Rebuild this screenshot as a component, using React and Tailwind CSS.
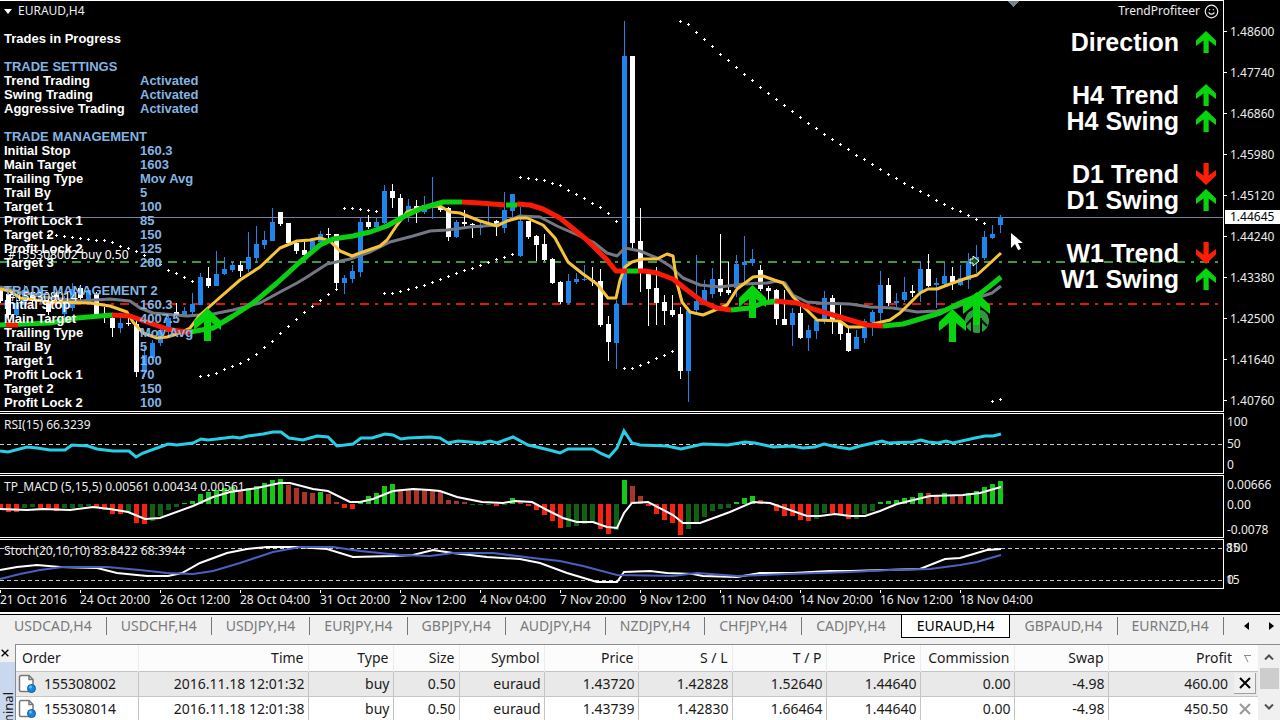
import { Smile } from 'lucide-react';

const SETTINGS = [
  { title: 'Trades in Progress', plain: true, rows: [] },
  {
    title: 'TRADE SETTINGS',
    rows: [
      ['Trend Trading', 'Activated'],
      ['Swing Trading', 'Activated'],
      ['Aggressive Trading', 'Activated'],
    ],
  },
  {
    title: 'TRADE MANAGEMENT',
    rows: [
      ['Initial Stop', '160.3'],
      ['Main Target', '1603'],
      ['Trailing Type', 'Mov Avg'],
      ['Trail By', '5'],
      ['Target 1', '100'],
      ['Profit Lock 1', '85'],
      ['Target 2', '150'],
      ['Profit Lock 2', '125'],
      ['Target 3', '200'],
    ],
  },
  {
    title: 'TRADE MANAGEMENT 2',
    rows: [
      ['Initial Stop', '160.3'],
      ['Main Target', '4007.5'],
      ['Trailing Type', 'Mov Avg'],
      ['Trail By', '5'],
      ['Target 1', '100'],
      ['Profit Lock 1', '70'],
      ['Target 2', '150'],
      ['Profit Lock 2', '100'],
    ],
  },
];

const SIGNALS = [
  [['Direction', true]],
  [['H4 Trend', true], ['H4 Swing', true]],
  [['D1 Trend', false], ['D1 Swing', true]],
  [['W1 Trend', false], ['W1 Swing', true]],
];

const PRICES = ['1.48600', '1.47740', '1.46860', '1.45980', '1.45120', '1.44240', '1.43380', '1.42500', '1.41640', '1.40760'];

const DATES = [
  '21 Oct 2016', '24 Oct 20:00', '26 Oct 12:00', '28 Oct 04:00', '31 Oct 20:00', '2 Nov 12:00', '4 Nov 04:00',
  '7 Nov 20:00', '9 Nov 12:00', '11 Nov 04:00', '14 Nov 20:00', '16 Nov 12:00', '18 Nov 04:00',
];

const TABS = ['USDCAD', 'USDCHF', 'USDJPY', 'EURJPY', 'GBPJPY', 'AUDJPY', 'NZDJPY', 'CHFJPY', 'CADJPY', 'EURAUD', 'GBPAUD', 'EURNZD'];

const ORDERS = [
  ['155308002', '2016.11.18 12:01:32', 'buy', '0.50', 'euraud', '1.43720', '1.42828', '1.52640', '1.44640', '0.00', '-4.98', '460.00'],
  ['155308014', '2016.11.18 12:01:38', 'buy', '0.50', 'euraud', '1.43739', '1.42830', '1.66464', '1.44640', '0.00', '-4.98', '450.50'],
];

// One candle every 8px: [colour, high, body top, body bottom, low]
const CANDLES = [
  ['w', 289, 290, 301, 303], ['w', 290, 294, 315, 318], ['b', 296, 303, 315, 318], ['b', 285, 290, 305, 308],
  ['w', 290, 295, 299, 304], ['b', 286, 290, 300, 304], ['w', 298, 302, 312, 315], ['w', 292, 295, 300, 304],
  ['b', 296, 300, 314, 318], ['b', 283, 289, 308, 311], ['w', 285, 288, 298, 302], ['b', 288, 290, 300, 304],
  ['w', 292, 294, 314, 316], ['w', 307, 314, 317, 323], ['w', 315, 318, 328, 337], ['b', 315, 323, 328, 333],
  ['w', 315, 323, 324, 326], ['w', 320, 324, 372, 377], ['b', 345, 355, 372, 377], ['b', 340, 343, 358, 360],
  ['b', 325, 330, 343, 346], ['b', 315, 318, 332, 335], ['w', 303, 312, 316, 317], ['b', 307, 311, 315, 317],
  ['b', 293, 304, 312, 315], ['b', 273, 277, 305, 305], ['w', 267, 278, 286, 288], ['b', 251, 274, 286, 286],
  ['b', 257, 269, 274, 275], ['b', 262, 265, 270, 272], ['w', 261, 265, 271, 277], ['b', 232, 257, 269, 272],
  ['b', 226, 244, 258, 262], ['b', 231, 240, 245, 249], ['b', 208, 222, 241, 241], ['w', 212, 212, 224, 226],
  ['w', 223, 223, 243, 243], ['w', 241, 243, 251, 254], ['w', 242, 250, 255, 256], ['b', 239, 241, 251, 252],
  ['b', 231, 234, 242, 246], ['w', 228, 234, 235, 239], ['w', 234, 234, 283, 291], ['b', 275, 278, 283, 294],
  ['b', 265, 271, 279, 283], ['b', 217, 222, 272, 277], ['w', 215, 222, 227, 229], ['b', 217, 222, 227, 228],
  ['b', 185, 191, 223, 224], ['w', 184, 191, 198, 208], ['w', 194, 198, 218, 220], ['b', 199, 206, 211, 222],
  ['w', 200, 206, 208, 223], ['b', 196, 205, 212, 214], ['b', 177, 204, 205, 219], ['w', 203, 206, 210, 212],
  ['w', 207, 208, 237, 241], ['b', 220, 222, 237, 238], ['w', 210, 222, 224, 227], ['w', 223, 224, 225, 238],
  ['b', 222, 227, 228, 235], ['b', 206, 226, 227, 227], ['w', 220, 221, 226, 236], ['b', 192, 210, 228, 233],
  ['b', 194, 194, 211, 217], ['b', 207, 221, 256, 257], ['w', 221, 221, 237, 239], ['w', 235, 236, 245, 261],
  ['w', 234, 244, 260, 261], ['w', 258, 259, 283, 284], ['w', 281, 282, 302, 304], ['b', 274, 281, 303, 304],
  ['b', 273, 279, 282, 284], ['b', 265, 279, 280, 281], ['w', 267, 280, 281, 286], ['w', 269, 281, 325, 327],
  ['w', 316, 324, 342, 361], ['b', 300, 304, 343, 369], ['b', 21, 56, 305, 305], ['w', 56, 56, 243, 251],
  ['w', 208, 241, 271, 292], ['w', 272, 274, 289, 326], ['w', 267, 288, 303, 325], ['w', 295, 302, 311, 325],
  ['w', 295, 310, 315, 317], ['w', 307, 314, 371, 379], ['b', 308, 311, 371, 402], ['b', 255, 301, 310, 312],
  ['b', 280, 290, 301, 303], ['b', 268, 279, 294, 298], ['w', 234, 279, 292, 296], ['w', 262, 290, 293, 295],
  ['b', 255, 264, 288, 297], ['b', 236, 262, 265, 283], ['b', 249, 259, 263, 266], ['w', 265, 270, 289, 291],
  ['w', 286, 288, 291, 300], ['w', 289, 290, 319, 325], ['w', 290, 319, 325, 325], ['b', 308, 313, 325, 346],
  ['w', 306, 313, 338, 339], ['b', 325, 330, 338, 351], ['b', 318, 320, 331, 339], ['b', 291, 298, 319, 324],
  ['w', 295, 298, 322, 334], ['w', 305, 322, 334, 340], ['w', 328, 333, 351, 352], ['b', 330, 337, 349, 349],
  ['b', 319, 321, 338, 343], ['b', 310, 312, 322, 336], ['b', 271, 285, 313, 322], ['w', 278, 285, 303, 306],
  ['b', 293, 301, 303, 307], ['b', 277, 292, 300, 302], ['w', 285, 291, 293, 297], ['b', 261, 269, 292, 302],
  ['w', 254, 269, 286, 287], ['b', 278, 283, 285, 308], ['b', 263, 276, 284, 287], ['w', 267, 276, 282, 290],
  ['b', 265, 278, 285, 286], ['b', 253, 262, 280, 289], ['b', 245, 257, 261, 273], ['b', 231, 237, 258, 260],
  ['b', 225, 234, 238, 239], ['b', 215, 217, 225, 233],
];

// Parabolic SAR runs: [first candle, prices along the run]
const SAR = [
  [6, [235, 235, 236, 237, 238, 239, 240, 240, 242, 246, 248, 251, 255, 259, 264, 270, 273, 277, 281]],
  [25, [376, 375, 373, 369, 366, 363, 359, 354, 347, 341, 333, 326, 319, 312, 306, 300, 294, 289]],
  [43, [208, 208, 209, 210, 211]],
  [48, [293, 293, 291, 289, 287, 285, 282, 279, 276, 273, 270, 268, 265, 262, 259, 257, 254]],
  [65, [177, 178, 179, 180, 183, 185, 190, 194, 198, 203, 207, 213, 221]],
  [78, [368, 368, 365, 362, 358, 355, 351]],
  [85, [21, 24, 32, 39, 46, 54, 60, 67, 74, 80, 87, 93, 99, 105, 111, 117, 123, 128, 134, 139, 144, 149, 155, 159, 164, 169, 174, 178, 183, 187, 191, 195, 200, 204, 208, 211, 215, 219, 223]],
  [124, [401, 399]],
];

const GRAY_MA =
  '0,287 20,292 43,297 80,301 110,299 130,301 140,308 153,313 187,316 213,314 233,310 260,303 280,292 297,283 307,277 327,264 350,259 370,252 390,242 413,236 430,231 447,230 470,227 497,225 507,221 520,216 540,217 557,226 573,233 593,242 607,253 617,256 625,248 640,251 657,258 670,266 683,278 700,285 720,287 743,284 767,283 777,281 785,283 793,295 807,302 820,303 850,304 870,307 893,308 917,312 937,311 957,307 977,298 992,293 1001,286';
const YELLOW_MA =
  '0,289 10,291 20,298 50,302 90,303 110,306 127,312 133,322 143,333 157,338 167,337 177,334 190,328 200,315 217,300 240,280 260,267 280,248 297,241 310,240 320,238 330,241 340,251 352,256 360,253 380,246 387,240 397,225 407,212 423,207 440,206 450,212 460,213 480,221 497,226 507,221 518,218 527,218 543,225 555,238 568,262 583,274 597,284 608,298 616,298 620,280 625,267 632,262 643,259 657,259 667,254 673,256 677,283 682,302 690,312 703,315 720,308 727,305 737,289 753,277 763,276 777,281 783,283 793,297 807,310 817,320 840,321 848,327 860,327 877,323 890,320 900,313 920,293 928,289 937,289 950,284 967,278 977,275 987,266 1001,253';

const TREND_MA = [
  ['up', '0,325 50,323 77,318 100,316 113,315'],
  ['down', '6,325 18,325'],
  ['up', '190,332 213,328 233,316 253,303 277,283 300,262 320,245 333,239 353,236 370,232 387,226 403,217 420,209 433,205 443,202 462,202'],
  ['down', '112,315 130,316 147,322 167,329 185,332 190,332'],
  ['down', '462,202 480,203 505,205'],
  ['down', '517,204 530,205 543,209 560,218 587,240 607,260 616,271 627,271'],
  ['up', '506,205 517,205'],
  ['down', '638,271 645,271 657,273 673,279 687,290 703,302 717,308 731,310'],
  ['up', '627,271 638,271'],
  ['up', '731,310 750,308 763,303 775,301'],
  ['down', '775,301 797,303 813,309 833,315 850,320 867,325 883,326'],
  ['up', '883,326 903,324 920,319 940,313 960,303 977,296 990,286 1001,277'],
];

const RSI =
  '0,451 8,452 27,447 37,448 50,450 65,450 72,445 88,446 97,449 113,451 129,451 136,457 143,453 168,444 177,445 193,443 201,439 208,440 217,439 233,437 240,438 248,436 263,434 273,432 281,432 289,438 303,440 317,436 328,437 337,446 353,444 361,438 372,438 385,434 393,435 401,439 408,438 430,437 440,438 448,443 458,441 482,443 490,441 497,443 513,437 528,445 537,447 553,451 560,453 568,449 593,449 602,454 609,457 617,448 624,431 632,443 640,445 667,446 681,449 703,444 728,445 745,442 755,443 773,447 792,446 803,448 815,447 824,444 837,447 850,449 860,446 882,441 888,443 913,442 921,440 928,442 938,443 946,441 953,443 975,438 985,436 993,436 1001,434';

// Histogram bars: [height above zero, shade]
const MACD_BARS = [
  [-4, 'R'], [-8, 'R'], [-8, 'R'], [-4, 'g'], [-3, 'g'], [-4, 'R'], [-4, 'R'], [-7, 'R'], [-4, 'g'], [-4, 'g'], [-3, 'g'], [-2, 'g'],
  [-3, 'R'], [-6, 'R'], [-10, 'R'], [-10, 'R'], [-8, 'g'], [-19, 'R'], [-20, 'R'], [-17, 'g'], [-12, 'g'], [-6, 'g'], [-3, 'g'],
  [1, 'G'], [3, 'G'], [10, 'G'], [12, 'G'], [14, 'G'], [16, 'G'], [17, 'G'], [14, 'r'], [16, 'G'], [18, 'G'], [21, 'G'], [24, 'G'],
  [25, 'G'], [19, 'r'], [16, 'r'], [12, 'r'], [11, 'r'], [12, 'G'], [10, 'r'], [2, 'r'], [-4, 'R'], [-5, 'R'], [2, 'G'], [8, 'G'],
  [11, 'G'], [18, 'G'], [20, 'G'], [15, 'r'], [15, 'r'], [14, 'r'], [14, 'r'], [13, 'r'], [12, 'r'], [4, 'r'], [3, 'r'], [2, 'r'],
  [-1, 'g'], [-1, 'g'], [-1, 'g'], [-2, 'R'], [-1, 'g'], [6, 'G'], [2, 'r'], [-2, 'R'], [-6, 'R'], [-11, 'R'], [-17, 'R'], [-24, 'R'],
  [-23, 'g'], [-22, 'g'], [-20, 'g'], [-19, 'g'], [-25, 'R'], [-30, 'R'], [-26, 'g'], [24, 'G'], [18, 'r'], [8, 'r'], [-2, 'R'],
  [-10, 'R'], [-16, 'R'], [-19, 'R'], [-31, 'R'], [-25, 'g'], [-18, 'g'], [-13, 'g'], [-7, 'g'], [-5, 'g'], [-4, 'g'], [2, 'G'],
  [6, 'G'], [8, 'G'], [4, 'r'], [2, 'r'], [-7, 'R'], [-12, 'R'], [-12, 'R'], [-16, 'R'], [-17, 'R'], [-15, 'g'], [-9, 'g'], [-9, 'R'],
  [-10, 'R'], [-15, 'R'], [-15, 'g'], [-10, 'g'], [-7, 'g'], [2, 'G'], [3, 'G'], [4, 'G'], [6, 'G'], [7, 'G'], [11, 'G'], [11, 'r'],
  [9, 'r'], [11, 'G'], [8, 'r'], [8, 'r'], [11, 'G'], [13, 'G'], [17, 'G'], [20, 'G'], [23, 'G'],
];
const MACD_SIGNAL =
  '0,509 27,510 43,509 70,510 93,507 110,509 128,512 145,519 160,518 193,506 213,497 230,492 257,488 280,483 290,483 313,489 328,491 350,502 360,502 373,499 393,491 413,489 430,490 440,491 457,497 482,502 503,503 515,501 532,502 547,510 563,518 577,522 593,522 607,527 617,528 624,513 632,503 648,502 673,515 683,523 700,523 730,512 753,502 770,503 787,509 807,516 820,516 835,514 850,516 865,516 880,511 897,504 930,496 963,495 980,493 1001,487';

const STOCH_MAIN =
  '0,570 17,567 37,565 60,567 97,568 117,573 147,576 168,576 182,573 200,563 227,553 247,549 267,547 297,547 327,549 353,557 393,556 413,555 433,550 453,553 487,557 520,559 540,563 567,573 597,582 617,582 624,572 650,571 667,573 693,574 703,576 737,577 760,573 793,573 830,571 850,571 920,569 945,559 960,558 987,550 1001,549';
const STOCH_SIGNAL =
  '0,579 20,574 40,570 63,567 107,567 140,570 167,573 193,574 213,571 240,563 273,552 300,547 333,547 360,551 400,555 430,556 453,553 493,553 533,558 560,561 583,566 617,575 673,576 697,573 737,576 787,574 850,572 890,570 930,569 960,565 977,562 987,559 1001,555';

const FILLS = { R: '#f6220f', r: '#a93429', G: '#14c816', g: '#0f5f14' };
const LINES = { up: '#0bcf12', down: '#fa1a06' };

function Arrow({ up = true, className }) {
  return (
    <svg viewBox="0 0 20 22" className={className} aria-hidden="true">
      <path
        d={up ? 'M10 0 20 9.5V15L12.7 9.5V22H7.5V9.5L0 15V9.5Z' : 'M10 22 20 12.5V7L12.7 12.5V0H7.5V12.5L0 7V12.5Z'}
        fill={up ? '#06d40c' : '#ff1d05'}
      />
    </svg>
  );
}

function BuyArrow({ x, y }) {
  return <path transform={`translate(${x - 13} ${y})`} d="M13.5 0 27 13V22L17 14V33H10V14L0 22V13Z" fill="#06d40c" />;
}

// A plot with its value scale; the drawing uses the coordinates of the whole chart window
function Panel({ className, top, scale, drawing, children }) {
  return (
    <div className={`grid grid-cols-[minmax(0,1fr)_56px] grid-rows-[minmax(0,1fr)] ${className}`}>
      <div className="relative overflow-hidden border-y border-r border-white">
        <svg className="absolute inset-0 h-full w-full" shapeRendering="crispEdges" aria-hidden="true">
          <g transform={`translate(0 ${-top - 1})`}>{drawing}</g>
        </svg>
        {children}
      </div>
      <div className="relative">{scale}</div>
    </div>
  );
}

function PriceDrawing() {
  return (
    <>
      <line x1="0" x2="100%" y1="217.5" y2="217.5" stroke="#7a819c" />
      <line x1="0" x2="99.6%" y1="261.5" y2="261.5" stroke="#3d9a48" strokeWidth="2" strokeDasharray="9 6 3 6" />
      <line x1="0" x2="99.6%" y1="303.5" y2="303.5" stroke="#d91a14" strokeWidth="2" strokeDasharray="9 6 3 6" />
      <path d="M1007 1h12l-6 6z" fill="#74828c" />
      {CANDLES.map(([c, high, top, bottom, low], i) => (
        <g key={i} fill={c === 'w' ? '#ffffff' : '#1e84ee'}>
          <rect x={i * 8} y={high} width="1" height={Math.max(low - high, 1)} />
          <rect x={i * 8 - 2} y={top} width="5" height={bottom - top} />
        </g>
      ))}
      {SAR.map(([first, ys]) =>
        ys.map((y, i) => (
          <path key={`${first}-${i}`} d={`M${(first + i) * 8 - 1} ${y + 0.5}h3M${(first + i) * 8 + 0.5} ${y - 1}v3`} stroke="#fff" />
        ))
      )}
      <g fill="none" strokeLinejoin="round" shapeRendering="auto">
        <polyline points={GRAY_MA} stroke="#747884" strokeWidth="3" />
        <polyline points={YELLOW_MA} stroke="#f6c43c" strokeWidth="3" />
        {TREND_MA.map(([dir, points]) => (
          <polyline key={points} points={points} stroke={LINES[dir]} strokeWidth="5" />
        ))}
      </g>
      <g shapeRendering="auto">
        <circle cx="977" cy="321" r="12" fill="#2f9a3c" />
        <path d="M965 326l11-11 11 11M972 318v16M981 318v16" fill="none" stroke="#000" strokeWidth="2" />
        <BuyArrow x={207} y={308} />
        <BuyArrow x={752} y={285} />
        <BuyArrow x={952} y={309} />
        <BuyArrow x={976} y={292} />
        <path d="M970 259h3v-3l6 5-6 5v-3h-3z" fill="#0d5c1c" stroke="#fff" />
        <path d="M1011 233v15l4-4 3 6 3-1-3-6h5z" fill="#fff" />
      </g>
    </>
  );
}

function TradeSettings() {
  return (
    <div className="flex w-52 flex-col gap-[14px] pt-[3px] pl-1 font-['Liberation_Sans',sans-serif] text-[13px] leading-[14px] font-bold">
      {SETTINGS.map(group => (
        <section key={group.title}>
          <h2 className={group.plain ? 'text-white' : 'text-[#84b4e2]'}>{group.title}</h2>
          <dl>
            {group.rows.map(([label, value]) => (
              <div key={label} className="flex">
                <dt className="w-[136px] text-white">{label}</dt>
                <dd className="text-[#84b4e2]">{value}</dd>
              </div>
            ))}
          </dl>
        </section>
      ))}
    </div>
  );
}

function Signals() {
  return (
    <div className="flex flex-col items-end gap-[27px] pr-[7px] font-['Liberation_Sans',sans-serif] text-[25px] leading-[26px] font-bold text-white">
      {SIGNALS.map(group => (
        <ul key={group[0][0]}>
          {group.map(([label, up]) => (
            <li key={label} className="flex items-center justify-end gap-[17px]">
              {label}
              <Arrow up={up} className="h-[22px] w-5" />
            </li>
          ))}
        </ul>
      ))}
    </div>
  );
}

function ChartWindow() {
  return (
    <main className="flex flex-col gap-px bg-black text-[12px] leading-[14px] text-[#ececec]">
      <Panel
        className="h-[412px]"
        top={0}
        drawing={<PriceDrawing />}
        scale={
          <>
            <ul className="pt-[11px]">
              {PRICES.map(p => (
                <li key={p} className="flex h-[41px] items-center gap-[3px]">
                  <span className="h-px w-[3px] bg-white" />
                  {p}
                </li>
              ))}
            </ul>
            <span className="absolute top-[210px] right-0 left-[1px] bg-white pl-[5px] text-black">1.44645</span>
          </>
        }
      >
        <span className="absolute top-[247px] left-2 text-white">#155308002 buy 0.50</span>
        <span className="absolute top-[289px] left-2 text-white">#155308014</span>
        <div className="relative">
          <div className="flex h-5 items-center justify-between pr-1 pl-1">
            <h1 className="flex items-center gap-[6px]">
              <svg viewBox="0 0 8 5" className="h-[5px] w-2" aria-hidden="true">
                <path d="M0 0h8L4 5z" fill="#fff" />
              </svg>
              EURAUD,H4
            </h1>
            <span className="flex items-center gap-1">
              TrendProfiteer
              <Smile size={15} strokeWidth={2} />
            </span>
          </div>
          <div className="flex items-start justify-between pt-2">
            <TradeSettings />
            <Signals />
          </div>
        </div>
      </Panel>

      <Panel
        className="h-[61px]"
        top={413}
        drawing={
          <>
            <line x1="0" x2="100%" y1="444.5" y2="444.5" stroke="#c8c8c8" strokeDasharray="4 3" />
            <polyline points={RSI} fill="none" stroke="#27cfe6" strokeWidth="3" shapeRendering="auto" />
          </>
        }
        scale={
          <ul className="flex h-full flex-col justify-between py-[2px] pl-[3px]">
            <li>100</li>
            <li>50</li>
            <li>0</li>
          </ul>
        }
      >
        <h2 className="relative pt-1 pl-1">RSI(15) 66.3239</h2>
      </Panel>

      <Panel
        className="h-[63px]"
        top={475}
        drawing={
          <>
            {MACD_BARS.map(([v, shade], i) => (
              <rect key={i} x={i * 8 - 2} y={v > 0 ? 504 - v : 504} width="5" height={Math.abs(v)} fill={FILLS[shade]} />
            ))}
            <polyline points={MACD_SIGNAL} fill="none" stroke="#fff" strokeWidth="2" shapeRendering="auto" />
          </>
        }
        scale={
          <ul className="pt-[3px] pl-[3px]">
            <li>0.00666</li>
            <li className="mt-[6px]">0.00</li>
            <li className="mt-[11px]">-0.0078</li>
          </ul>
        }
      >
        <h2 className="relative pt-1 pl-1">TP_MACD (5,15,5) 0.00561 0.00434 0.00561</h2>
      </Panel>

      <Panel
        className="h-[50px]"
        top={539}
        drawing={
          <>
            <line x1="0" x2="100%" y1="548.5" y2="548.5" stroke="#c8c8c8" strokeDasharray="4 3" />
            <line x1="0" x2="100%" y1="580.5" y2="580.5" stroke="#c8c8c8" strokeDasharray="4 3" />
            <g fill="none" strokeWidth="2" shapeRendering="auto">
              <polyline points={STOCH_MAIN} stroke="#fff" />
              <polyline points={STOCH_SIGNAL} stroke="#4a60c0" />
            </g>
          </>
        }
        scale={
          <>
            <ul className="flex h-full flex-col justify-between py-[2px] pl-[3px]">
              <li>100</li>
              <li>0</li>
            </ul>
            <span className="absolute top-[2px] left-[2px]">85</span>
            <span className="absolute bottom-[2px] left-[2px]">15</span>
          </>
        }
      >
        <h2 className="relative pt-1 pl-1">Stoch(20,10,10) 83.8422 68.3944</h2>
      </Panel>

      <ol className="flex h-[22px] overflow-hidden">
        {DATES.map(d => (
          <li key={d} className="w-20 shrink-0 whitespace-nowrap">
            <span className="block h-[3px] w-px bg-white" />
            {d}
          </li>
        ))}
      </ol>
    </main>
  );
}

function SymbolTabs() {
  return (
    <nav className="flex h-7 items-start border-t-2 border-white bg-[#f0f0f0] text-[14px] leading-5 text-[#7a7a7a]">
      <div className="flex min-w-0 flex-1 items-center overflow-hidden border-t border-black">
        {TABS.map(t =>
          t === 'EURAUD' ? (
            <button key={t} type="button" className="h-[23px] shrink-0 border border-t-0 border-black bg-white px-[15px] text-black">
              {t},H4
            </button>
          ) : (
            <button key={t} type="button" className="flex h-[23px] shrink-0 items-center pb-px pl-[14px]">
              {t},H4
              <span className={t === 'CADJPY' ? 'w-[15px]' : 'ml-[14px] h-[18px] w-px bg-[#777]'} />
            </button>
          )
        )}
      </div>
      <div className="flex h-[23px] w-12 items-center justify-between border-t border-black pr-[6px] pl-3">
        <button type="button" aria-label="Scroll tabs left">
          <svg viewBox="0 0 5 8" className="h-2 w-[5px]"><path d="M5 0v8L0 4z" /></svg>
        </button>
        <button type="button" aria-label="Scroll tabs right">
          <svg viewBox="0 0 5 8" className="h-2 w-[5px]"><path d="M0 0v8l5-4z" /></svg>
        </button>
      </div>
    </nav>
  );
}

function Cross({ className }) {
  return (
    <svg viewBox="0 0 12 12" className={className} fill="none" stroke="currentColor" strokeWidth="2" aria-hidden="true">
      <path d="M1 1l10 10M11 1 1 11" />
    </svg>
  );
}

function OrderIcon() {
  return (
    <svg viewBox="0 0 19 20" className="h-5 w-[19px] shrink-0" aria-hidden="true">
      <path d="M3 1.5h8l4 4v12H3a1.5 1.5 0 0 1-1.5-1.5V3A1.5 1.5 0 0 1 3 1.5z" fill="#fff" stroke="#777" strokeWidth="1.5" />
      <path d="M11 1.5v4h4" fill="none" stroke="#777" strokeWidth="1.5" />
      <circle cx="13.5" cy="14.5" r="4" fill="#1b86d8" stroke="#0f5f9f" />
      <circle cx="12.5" cy="13" r="1.5" fill="#6bbcf2" />
    </svg>
  );
}

function Terminal() {
  return (
    <section className="flex h-20 overflow-hidden bg-[#f0f0f0] pt-1 text-[14px] leading-5 text-[#1a1a1a]">
      <div className="flex w-[15px] shrink-0 flex-col">
        <button type="button" aria-label="Close terminal" className="flex h-[18px] shrink-0 items-center pl-px text-black">
          <Cross className="h-2 w-2" />
        </button>
        <div className="flex h-[82px] shrink-0 items-start justify-center bg-[#c9d8ef] pt-[30px] text-[13px] leading-[14px]">
          <span className="rotate-180 [writing-mode:vertical-rl]">Terminal</span>
        </div>
      </div>
      <div className="min-w-0 flex-1 border-t border-l border-[#8c8c8c] bg-white">
        <table className="w-full table-fixed border-collapse text-right whitespace-nowrap">
          <colgroup>
            <col className="w-[122px]" />
            <col className="w-[170px]" />
            <col className="w-[85px]" />
            <col className="w-[66px]" />
            <col className="w-[85px]" />
            <col className="w-[94px]" />
            <col className="w-[94px]" />
            <col className="w-[94px]" />
            <col className="w-[94px]" />
            <col className="w-[94px]" />
            <col className="w-[94px]" />
            <col />
          </colgroup>
          <thead>
            <tr className="h-[26px] bg-[#fcfcfc]">
              {['Order', 'Time', 'Type', 'Size', 'Symbol', 'Price', 'S / L', 'T / P', 'Price', 'Commission', 'Swap'].map((h, i) => (
                <th key={i} scope="col" className={`border-r border-[#ececec] pt-px font-normal ${i === 0 ? 'pl-[6px] text-left' : 'pr-1'}`}>
                  {h}
                </th>
              ))}
              <th scope="col" className="pt-px font-normal">
                <span className="flex items-center justify-end gap-3 pr-[7px]">
                  Profit
                  <svg viewBox="0 0 7 7" className="h-[7px] w-[7px]" fill="none" stroke="#888" aria-hidden="true">
                    <path d="M0 .5h7M1 1l3 6" />
                  </svg>
                </span>
              </th>
            </tr>
          </thead>
          <tbody>
            {ORDERS.map((row, r) => (
              <tr key={row[0]} className={`h-[25px] border-t border-[#c4c4c4] ${r === 0 ? 'bg-[#e9e9e9]' : 'bg-white'}`}>
                {row.slice(0, 11).map((cell, i) => (
                  <td key={i} className="border-r border-[#c4c4c4] pr-[3px]">
                    {i === 0 ? (
                      <span className="flex items-center gap-[7px]">
                        <span className="pl-[2px]"><OrderIcon /></span>
                        {cell}
                      </span>
                    ) : (
                      cell
                    )}
                  </td>
                ))}
                <td>
                  <span className="flex items-center justify-end gap-[6px] pr-[2px]">
                    {row[11]}
                    <button
                      type="button"
                      aria-label={`Close order ${row[0]}`}
                      className={`flex h-[21px] w-[22px] items-center justify-center ${r === 0 ? 'border-r border-b border-[#a0a0a0] bg-[#f0f0f0] text-black' : 'text-[#999]'}`}
                    >
                      <Cross className="h-3 w-3" />
                    </button>
                  </span>
                </td>
              </tr>
            ))}
          </tbody>
        </table>
      </div>
      <div className="flex w-[22px] shrink-0 flex-col items-center border-t border-[#8c8c8c] bg-[#f0f0f0]">
        <button type="button" aria-label="Scroll up" className="flex h-[23px] shrink-0 items-center">
          <svg viewBox="0 0 10 6" className="h-[6px] w-[10px]" fill="none" stroke="#505050" strokeWidth="2"><path d="M1 5.5 5 1.5l4 4" /></svg>
        </button>
        <div className="h-[21px] w-[19px] shrink-0 bg-[#cdcdcd]" />
        <button type="button" aria-label="Scroll down" className="flex flex-1 items-center pt-1">
          <svg viewBox="0 0 10 6" className="h-[6px] w-[10px]" fill="none" stroke="#505050" strokeWidth="2"><path d="M1 .5l4 4 4-4" /></svg>
        </button>
      </div>
    </section>
  );
}

export default function App() {
  return (
    <div className="min-h-screen bg-[#f0f0f0] font-['Noto_Sans',sans-serif]">
      <ChartWindow />
      <SymbolTabs />
      <Terminal />
    </div>
  );
}
